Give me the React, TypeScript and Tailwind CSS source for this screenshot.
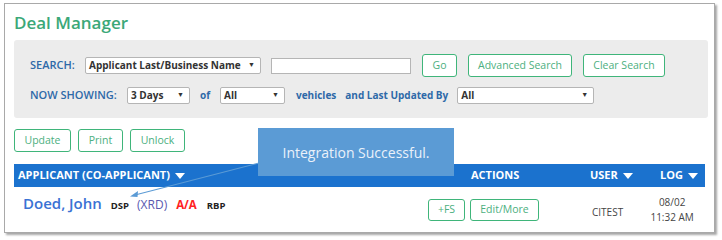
import React from "react";

const font = { fontFamily: '"Open Sans", "Liberation Sans", sans-serif' };

function Sel({ label, w }: { label: string; w: string }) {
  return (
    <div
      className={`${w} h-[17px] bg-white border border-[#b5b5b5] rounded-[2px] flex items-center justify-between pl-[3px] pr-[5px] text-[10px] font-bold text-[#333]`}
    >
      <span>{label}</span>
      <span className="text-[7px] text-[#333]">▼</span>
    </div>
  );
}

function Btn({ label, w, h = "h-[23px]" }: { label: string; w: string; h?: string }) {
  return (
    <div
      className={`${w} ${h} bg-white border border-[#3fb57a] rounded-[3px] flex items-center justify-center text-[10.5px] text-[#4caf80]`}
    >
      {label}
    </div>
  );
}

function Caret() {
  return (
    <svg className="ml-[5px] inline-block" width="10" height="6" viewBox="0 0 10 6">
      <path d="M0 0 H10 L5 6 Z" fill="white" />
    </svg>
  );
}

export default function App() {
  return (
    <div className="w-[722px] h-[240px] bg-white" style={font}>
      <div className="relative ml-[4px] mt-[3px] w-[711px] h-[230px] border border-[#a9a9a9] bg-white shadow-[2px_2px_2px_rgba(0,0,0,0.35)] pl-[9px] pr-[6px]">
        {/* header */}
        <h1 className="pt-[6px] h-[36px] text-[17px] font-semibold text-[#3ba878] leading-[26px]">
          Deal Manager
        </h1>

        {/* search panel */}
        <div className="h-[78px] bg-[#ececec] rounded-[3px] pl-[16px] pt-[14px]">
          <div className="flex items-center h-[23px]">
            <span className="text-[11px] font-semibold text-[#2e69a8] w-[55px]">SEARCH:</span>
            <Sel label="Applicant Last/Business Name" w="w-[176px]" />
            <div className="ml-[10px] w-[140px] h-[16px] bg-white border border-[#b5b5b5]" />
            <div className="ml-[11px]">
              <Btn label="Go" w="w-[35px]" />
            </div>
            <div className="ml-[11px]">
              <Btn label="Advanced Search" w="w-[104px]" />
            </div>
            <div className="ml-[11px]">
              <Btn label="Clear Search" w="w-[82px]" />
            </div>
          </div>
          <div className="flex items-center h-[17px] mt-[10px]">
            <span className="text-[11px] font-semibold text-[#2e69a8] w-[97px]">NOW SHOWING:</span>
            <Sel label="3 Days" w="w-[63px]" />
            <span className="ml-[10px] w-[20px] text-[10px] font-bold text-[#2e69a8]">of</span>
            <Sel label="All" w="w-[65px]" />
            <span className="ml-[11px] text-[10px] font-bold text-[#2e69a8]">vehicles</span>
            <span className="ml-[9px] text-[10px] font-bold text-[#2e69a8]">and Last Updated By</span>
            <div className="ml-[9px]">
              <Sel label="All" w="w-[137px]" />
            </div>
          </div>
        </div>

        {/* action buttons */}
        <div className="flex gap-[7px] mt-[11px]">
          <Btn label="Update" w="w-[57px]" />
          <Btn label="Print" w="w-[45px]" />
          <Btn label="Unlock" w="w-[55px]" />
        </div>

        {/* table header */}
        <div className="mt-[12px] mr-[3px] h-[23px] bg-[#1b72ce] flex items-center text-[11px] font-bold text-white">
          <span className="pl-[4px] w-[457px] flex items-center">
            APPLICANT (CO-APPLICANT)
            <Caret />
          </span>
          <span className="w-[119px]">ACTIONS</span>
          <span className="w-[70px] flex items-center">
            USER
            <Caret />
          </span>
          <span className="flex items-center">
            LOG
            <Caret />
          </span>
        </div>

        {/* row */}
        <div className="flex items-start h-[40px]">
          <div className="flex items-baseline pl-[9px] pt-[5px] w-[414px]">
            <span className="text-[15px] font-semibold text-[#3a72d4]">Doed, John</span>
            <span className="ml-[9px] text-[9.5px] font-bold text-[#222]">DSP</span>
            <span className="ml-[8px] text-[12px] text-[#5a58b0]">(XRD)</span>
            <span className="ml-[9px] text-[11.5px] font-bold text-[#ff2222]">A/A</span>
            <span className="ml-[10px] text-[9.5px] font-bold text-[#222]">RBP</span>
          </div>
          <div className="flex gap-[5px] pt-[12px]">
            <Btn label="+FS" w="w-[37px]" h="h-[22px]" />
            <Btn label="Edit/More" w="w-[69px]" h="h-[22px]" />
          </div>
          <span className="ml-[53px] pt-[18px] text-[10px] text-[#444]">CITEST</span>
          <div className="ml-[24px] w-[50px] pt-[8px] text-[10px] text-[#444] leading-[15px] text-center">
            <div>08/02</div>
            <div>11:32 AM</div>
          </div>
        </div>

        {/* tooltip overlay */}
        <div className="absolute left-[253px] top-[124px] w-[196px] h-[48px] bg-[#5b9bd5] flex items-center justify-center text-[14px] text-[#eaf1fa]">
          Integration Successful.
        </div>
        <svg className="absolute left-0 top-0" width="711" height="230" viewBox="0 0 711 230">
          <line x1="254" y1="159" x2="130" y2="191" stroke="#5b9bd5" strokeWidth="1.2" />
          <path d="M125 192.5 L133 187 L132.5 193 Z" fill="#5b9bd5" />
        </svg>
      </div>
    </div>
  );
}
